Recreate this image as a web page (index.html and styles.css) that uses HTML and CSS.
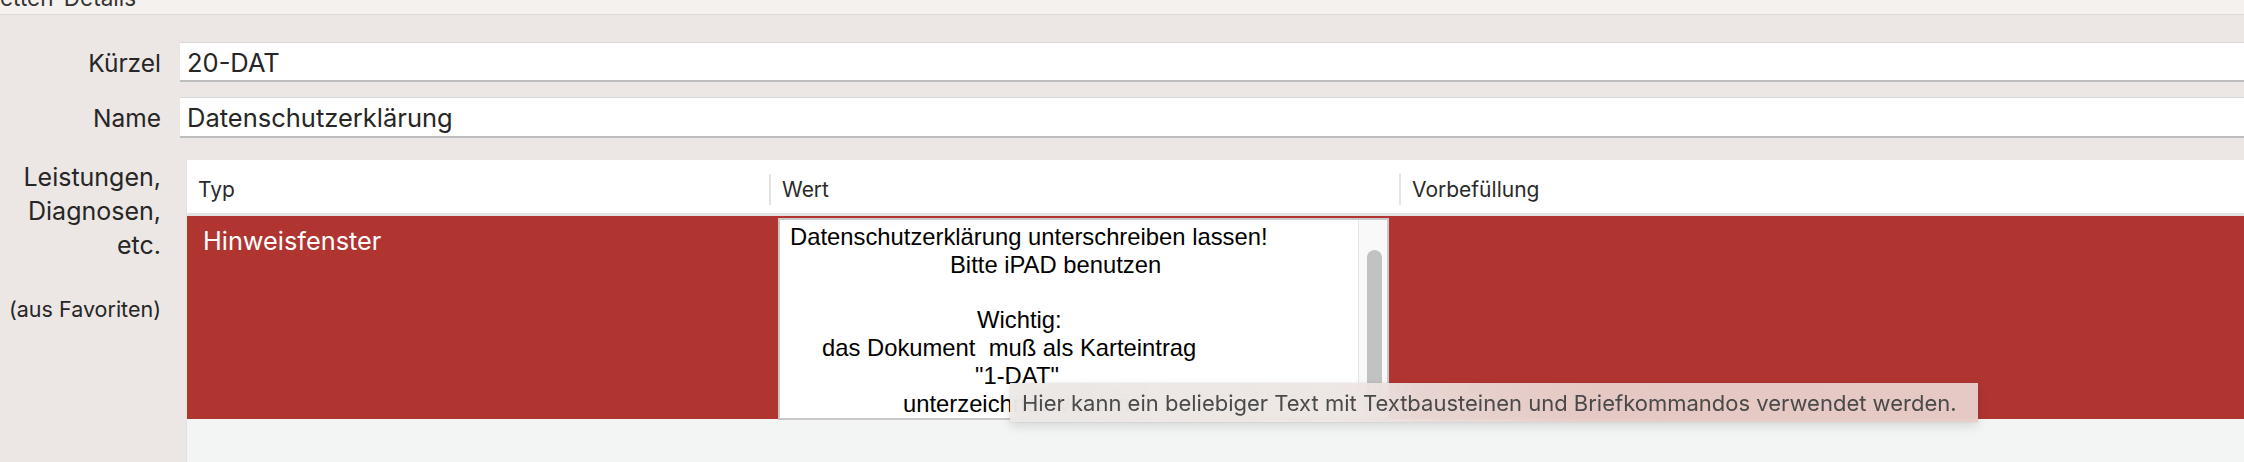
FILE: index.html
```html
<!DOCTYPE html>
<html lang="de">
<head>
<meta charset="utf-8">
<title>Etiketten-Details</title>
<link rel="stylesheet" href="styles.css">
</head>
<body>
<div class="titlebar"><span class="title-text">etten-Details</span></div>
<div class="form">
  <div class="label row-kuerzel">Kürzel</div>
  <div class="field row-kuerzel">20-DAT</div>
  <div class="label row-name">Name</div>
  <div class="field row-name">Datenschutzerklärung</div>
  <div class="label label-multi">
    <div class="multi">Leistungen,<br>Diagnosen,<br>etc.</div>
    <div class="sub">(aus Favoriten)</div>
  </div>
  <div class="table">
    <div class="thead">
      <div class="th"><span class="th-text">Typ</span></div>
      <div class="th sep"><span class="th-text">Wert</span></div>
      <div class="th sep"><span class="th-text">Vorbefüllung</span></div>
    </div>
    <div class="trow">
      <div class="td type">Hinweisfenster</div>
      <div class="td value">
        <div class="textbox">
          <div class="textbox-text">
            <div class="ln l1">Datenschutzerklärung unterschreiben lassen!</div>
            <div class="ln l2">Bitte iPAD benutzen</div>
            <div class="ln l3">&nbsp;</div>
            <div class="ln l4">Wichtig:</div>
            <div class="ln l5">das Dokument&nbsp; muß als Karteintrag</div>
            <div class="ln l6">"1-DAT"</div>
            <div class="ln l7">unterzeichnet werden.</div>
          </div>
          <div class="scrolltrack"><div class="thumb"></div></div>
        </div>
      </div>
      <div class="td prefill"></div>
    </div>
    <div class="tfill"></div>
  </div>
</div>
<div class="tooltip">Hier kann ein beliebiger Text mit Textbausteinen und Briefkommandos verwendet werden.</div>
</body>
</html>
```
FILE: styles.css
```css
* { box-sizing: border-box; }
html, body { margin: 0; padding: 0; }
body {
  width: 2244px;
  height: 462px;
  overflow: hidden;
  background: #ece7e4;
  font-family: Inter, "Liberation Sans", sans-serif;
  color: #262626;
  position: relative;
  display: flex;
  flex-direction: column;
}
.titlebar {
  height: 15px;
  flex: none;
  background: #f5f1ee;
  border-bottom: 1px solid #ddd9d6;
  overflow: hidden;
}
.title-text {
  display: block;
  font-size: 22.5px;
  line-height: 22px;
  margin-top: -13px;
  color: #333;
  white-space: nowrap;
}
.form {
  flex: 1;
  display: grid;
  grid-template-columns: 180px 1fr;
  grid-template-rows: 40px 41px 1fr;
  row-gap: 15px;
  padding-top: 27px;
  min-height: 0;
}
.form > .table { margin-top: 7px; }
.label {
  font-size: 24.5px;
  text-align: right;
  padding-right: 19px;
  display: flex;
  align-items: center;
  justify-content: flex-end;
  padding-top: 1px;
}
.field {
  background: #fff;
  border-top: 1px solid #d9d9d9;
  border-bottom: 2px solid #bdbdbd;
  font-size: 25.5px;
  padding-left: 7px;
  display: flex;
  align-items: center;
  padding-top: 1px;
}
.label-multi {
  flex-direction: column;
  align-items: flex-end;
  justify-content: flex-start;
  padding-top: 7px;
}
.multi { line-height: 34px; font-size: 25px; }
.sub {
  font-size: 21.5px;
  margin-top: 34px;
}
.table {
  margin-left: 6px;
  display: flex;
  flex-direction: column;
  background: #f3f4f4;
  border-left: 1px solid #e4e2e1;
  min-height: 0;
}
.thead, .trow {
  display: grid;
  grid-template-columns: 582px 630px 1fr;
}
.thead {
  height: 56px;
  background: #fff;
  border-bottom: 3px solid #e2e3e4;
}
.th {
  display: flex;
  align-items: center;
  font-size: 21px;
  color: #2a2a2a;
  padding-left: 11px;
  padding-top: 5px;
}
.th.sep { padding-left: 0; }
.th.sep .th-text {
  border-left: 2px solid #e4e4e4;
  padding-left: 11px;
  height: 31px;
  display: flex;
  align-items: center;
}
.trow {
  height: 203px;
  background: #b03531;
}
.td.type {
  color: #fff;
  font-size: 25.3px;
  padding-left: 16px;
  padding-top: 9px;
}
.td.value {
  padding: 2px 10px 2px 9px;
}
.textbox {
  height: 100%;
  background: #fff;
  border: 2px solid #c9c9c9;
  display: flex;
  overflow: hidden;
}
.textbox-text {
  flex: 1;
  font-family: "Liberation Sans", Arial, sans-serif;
  font-size: 23.8px;
  line-height: 27.8px;
  color: #000;
  padding-top: 3px;
  white-space: nowrap;
  overflow: hidden;
}
.l1 { padding-left: 10px; }
.l2 { padding-left: 170px; }
.l4 { padding-left: 197px; }
.l5 { padding-left: 42px; }
.l6 { padding-left: 195px; }
.l7 { padding-left: 123px; }
.scrolltrack {
  width: 29px;
  flex: none;
  background: #f9f9f9;
  border-left: 1px solid #e6e6e6;
  padding: 30px 0 0 8px;
}
.thumb {
  width: 15px;
  height: 160px;
  border-radius: 8px;
  background: #c2c2c2;
}
.tfill { flex: 1; }
.tooltip {
  position: absolute;
  left: 1010px;
  top: 383px;
  width: 968px;
  height: 39px;
  padding-left: 12px;
  display: flex;
  align-items: center;
  font-size: 22px;
  color: #4a4a4a;
  background: linear-gradient(to right, rgba(236, 232, 229, 0.95) 0%, rgba(236, 228, 225, 0.92) 40%, rgba(232, 208, 203, 0.95) 60%, rgba(232, 207, 202, 0.96) 100%);
  backdrop-filter: blur(18px);
  box-shadow: 0 4px 10px rgba(0, 0, 0, 0.12), 0 0 1px rgba(0, 0, 0, 0.2);
  white-space: nowrap;
}
```
